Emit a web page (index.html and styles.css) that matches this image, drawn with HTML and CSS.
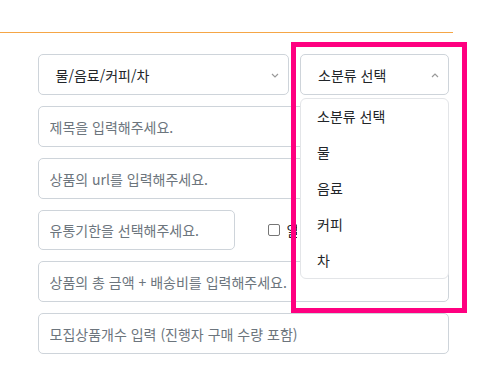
FILE: index.html
```html
<!DOCTYPE html>
<html lang="ko">
<head>
<meta charset="utf-8">
<link rel="stylesheet" href="styles.css">
</head>
<body>
<div class="page">
  <div class="topbar"></div>
  <form class="form">
    <div class="row selects">
      <div class="select select-main">
        <span>물/음료/커피/차</span>
        <svg class="chev" width="8" height="5" viewBox="0 0 8 5"><path d="M1 1 L4 4 L7 1" fill="none" stroke="#9a9a9a" stroke-width="1.2"/></svg>
      </div>
      <div class="select select-sub">
        <span>소분류 선택</span>
        <svg class="chev" width="8" height="5" viewBox="0 0 8 5"><path d="M1 4 L4 1 L7 4" fill="none" stroke="#9a9a9a" stroke-width="1.2"/></svg>
      </div>
    </div>
    <input class="field" type="text" placeholder="제목을 입력해주세요.">
    <input class="field" type="text" placeholder="상품의 url를 입력해주세요.">
    <div class="row date-row">
      <input class="field date" type="text" placeholder="유통기한을 선택해주세요.">
      <label class="check"><span class="box"></span><span class="check-text">알 수 없음</span></label>
    </div>
    <input class="field" type="text" placeholder="상품의 총 금액 + 배송비를 입력해주세요.">
    <input class="field" type="text" placeholder="모집상품개수 입력 (진행자 구매 수량 포함)">
    <ul class="dropdown">
      <li>소분류 선택</li>
      <li>물</li>
      <li>음료</li>
      <li>커피</li>
      <li>차</li>
    </ul>
    <div class="highlight"></div>
  </form>
</div>
</body>
</html>
```
FILE: styles.css
```css
* { box-sizing: border-box; }
html, body { margin: 0; padding: 0; background: #fff; }
body {
  font-family: "Noto Sans CJK KR", "Noto Sans", sans-serif;
  font-size: 14px;
  color: #212529;
}
.page { width: 486px; height: 371px; position: relative; overflow: hidden; }
.topbar {
  width: 453px;
  height: 33px;
  border-bottom: 1px solid #f5a646;
}
.form {
  position: relative;
  display: flex;
  flex-direction: column;
  gap: 11px;
  padding: 21px 0 0 37.5px;
  width: 449px;
}
.row { display: flex; align-items: center; }
.selects { gap: 11.5px; }
.select {
  height: 41px;
  border: 1px solid #ced4da;
  border-radius: 5px;
  display: flex;
  align-items: center;
  justify-content: space-between;
  padding: 0 9px 0 17px;
  background: #fff;
}
.select-main { width: 251px; flex: none; }
.select-sub { width: 149px; flex: none; padding-right: 9px; }
.chev { display: block; margin-top: 1px; }
.field {
  display: block;
  width: 100%;
  height: 41px;
  border: 1px solid #ced4da;
  border-radius: 5px;
  padding: 0 11px;
  font-family: inherit;
  font-size: 14px;
  color: #212529;
  background: #fff;
  outline: none;
  margin: 0;
}
.field::placeholder { color: #6c757d; opacity: 1; }
.date-row { gap: 33px; }
.field.date { width: 197px; height: 40px; flex: none; }
.check { display: flex; align-items: center; gap: 7px; color: #212529; white-space: nowrap; }
.check-text { display: block; width: 10px; overflow: hidden; }
.box {
  width: 12px; height: 12px;
  border: 1px solid #767676;
  border-radius: 2px;
  background: #fff;
}
.dropdown {
  position: absolute;
  left: 300px;
  top: 65px;
  width: 149px;
  height: 181px;
  margin: 0;
  padding: 0;
  list-style: none;
  background: #fff;
  border: 1px solid #e3e5e8;
  border-radius: 6px;
}
.dropdown li {
  height: 36px;
  line-height: 34px;
  padding-left: 16px;
  color: #212529;
}
.highlight {
  position: absolute;
  left: 291px;
  top: 9px;
  width: 176px;
  height: 271px;
  border: 5px solid #ff0080;
}
```
